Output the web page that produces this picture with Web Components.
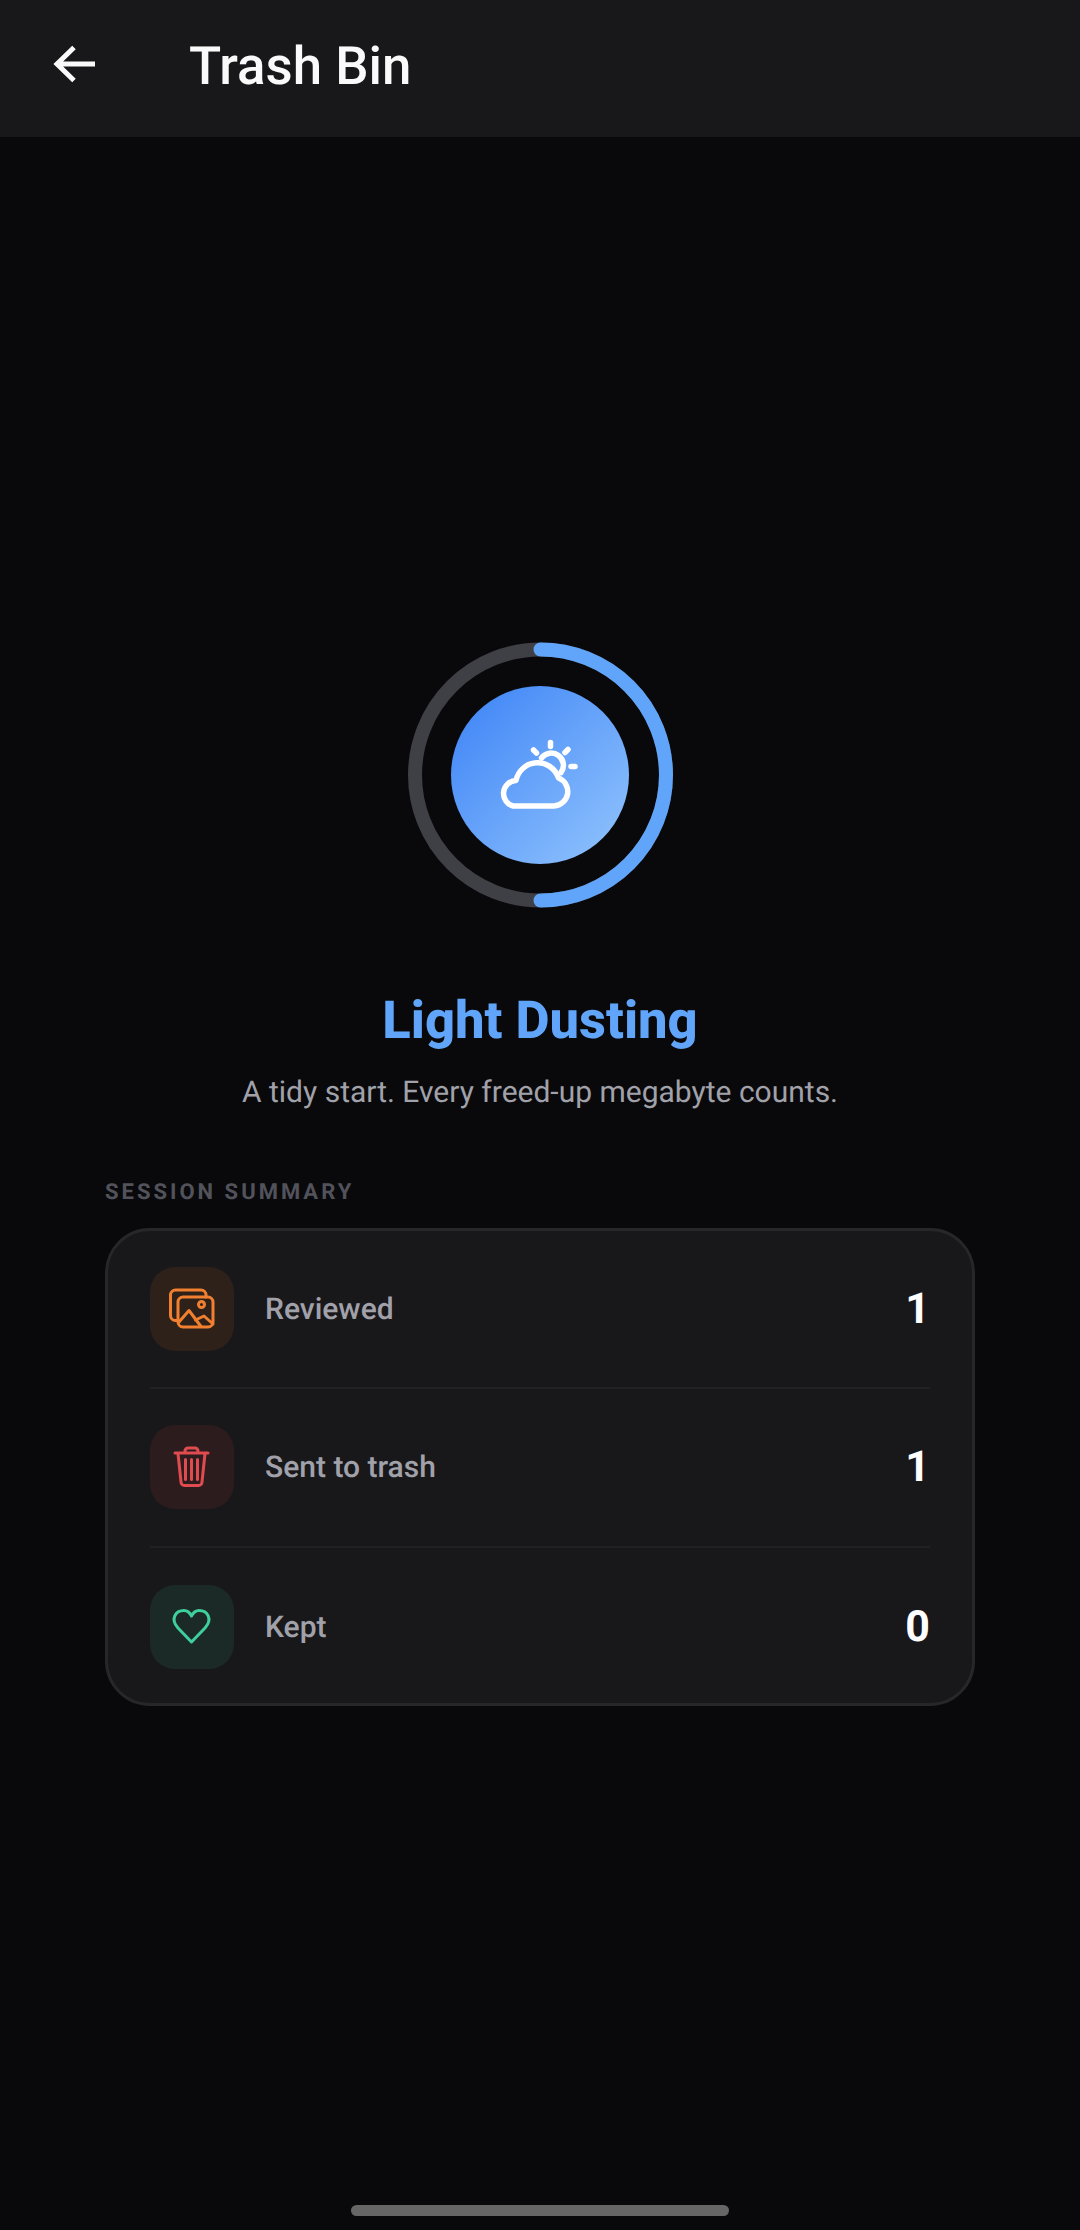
<!DOCTYPE html>
<html>
<head>
<meta charset="utf-8">
<title>Trash Bin</title>
<style>
  html, body { margin: 0; padding: 0; background: #09090b; }
  body { width: 1080px; height: 2230px; overflow: hidden; font-family: Roboto, "Liberation Sans", sans-serif; text-rendering: geometricPrecision; }
  trash-screen { height: 2230px; }
</style>
</head>
<body>
<trash-screen>
  <app-bar slot="header">Trash Bin</app-bar>
  <score-ring></score-ring>
  <span slot="title">Light Dusting</span>
  <span slot="subtitle">A tidy start. Every freed-up megabyte counts.</span>
  <span slot="section">SESSION SUMMARY</span>
  <summary-card slot="card">
    <summary-row icon="photos" count="1">Reviewed</summary-row>
    <summary-row icon="trash" count="1">Sent to trash</summary-row>
    <summary-row icon="heart" count="0">Kept</summary-row>
  </summary-card>
</trash-screen>

<script>
class TrashScreen extends HTMLElement {
  constructor() {
    super();
    this.attachShadow({ mode: "open" });
    this.shadowRoot.innerHTML = `
      <style>
        :host { display: flex; flex-direction: column; width: 1080px; background: #09090b; color: #fff; }
        .body { flex: 1; display: flex; flex-direction: column; align-items: center; padding-top: 505px; }
        .title { margin-top: 81px; height: 62px; line-height: 62px; font-size: 52.5px; font-weight: 800; color: #60a5fa; }
        .subtitle { margin-top: 22px; height: 40px; line-height: 40px; font-size: 30px; color: #a1a1aa; }
        .section { align-self: flex-start; margin: 66px 0 0 105px; height: 28px; line-height: 28px; font-size: 22px; font-weight: 700; letter-spacing: 3px; color: #52525b; }
        .card { margin-top: 21px; }
        .home { width: 378px; height: 11px; border-radius: 6px; background: #666; margin: 0 auto 14px; }
      </style>
      <slot name="header"></slot>
      <div class="body">
        <slot></slot>
        <div class="title"><slot name="title"></slot></div>
        <div class="subtitle"><slot name="subtitle"></slot></div>
        <div class="section"><slot name="section"></slot></div>
        <div class="card"><slot name="card"></slot></div>
      </div>
      <div class="home"></div>
    `;
  }
}

class AppBar extends HTMLElement {
  constructor() {
    super();
    this.attachShadow({ mode: "open" });
    this.shadowRoot.innerHTML = `
      <style>
        :host { display: flex; align-items: center; height: 137px; background: #18181b; box-sizing: border-box; padding: 0 0 6px 48px; flex: none; }
        svg { display: block; width: 52px; height: 52px; flex: none; }
        .t { margin-left: 89px; font-size: 52.8px; font-weight: 500; color: #fafafa; line-height: 60px; }
      </style>
      <svg viewBox="0 0 52 52" fill="none" stroke="#fafafa" stroke-width="5">
        <path d="M47 24H9M26 7.500L9 24L26 40.500"/>
      </svg>
      <div class="t"><slot></slot></div>
    `;
  }
}

class ScoreRing extends HTMLElement {
  constructor() {
    super();
    this.attachShadow({ mode: "open" });
    this.shadowRoot.innerHTML = `
      <style>
        :host { display: block; position: relative; width: 266px; height: 266px; }
        svg { display: block; }
        .disc { position: absolute; left: 44px; top: 44px; width: 178px; height: 178px; border-radius: 50%;
          background: linear-gradient(135deg, #3b82f6, #93c5fd); }
      </style>
      <svg width="266" height="266" viewBox="0 0 266 266" fill="none" stroke-width="14">
        <circle cx="133.500" cy="133" r="125.500" stroke="#3f3f46"/>
        <path d="M133.500 7.500A125.500 125.500 0 0 1 133.500 258.500" stroke="#60a5fa" stroke-linecap="round"/>
      </svg>
      <div class="disc">
        <!-- drawn in 130x110 box, placed on the disc -->
        <svg width="130" height="110" viewBox="0 0 130 110" fill="none" stroke="#fff" stroke-width="5.500" stroke-linecap="round" stroke-linejoin="round" style="position:absolute;left:18px;top:34px">
          <path d="M44 86H85A14.500 14.500 0 0 0 89.500 58A22 22 0 0 0 47 60.500A13 13 0 0 0 44 86Z"/>
          <path d="M72.500 38A12 12 0 0 1 92 52.500"/>
          <path d="M81.500 22.500V26.500M64.500 30L67.500 33M99 29.500L96 32.500M102 46.500H106"/>
        </svg>
      </div>
    `;
  }
}

class SummaryCard extends HTMLElement {
  constructor() {
    super();
    this.attachShadow({ mode: "open" });
    this.shadowRoot.innerHTML = `
      <style>
        :host { display: block; width: 870px; box-sizing: border-box; background: #18181b; border: 3px solid #27272a; border-radius: 45px; padding: 0 42px; }
      </style>
      <slot></slot>
    `;
  }
}

const ROW_ICONS = {
  photos: {
    tile: "#2d2119",
    color: "#f08030",
    box: "20 17 84 84",
    path: `<path d="M48 70.500H45.500A5 5 0 0 1 40.500 65.500V45A5 5 0 0 1 45.500 40H71A5 5 0 0 1 76 45V47"/>
      <rect x="48" y="47" width="35" height="30" rx="5"/>
      <circle cx="71.500" cy="54.500" r="3"/>
      <path d="M49 72L59 60.500L71 76.500M65.500 70L74 66L83 74"/>`
  },
  trash: {
    tile: "#2d1c1d",
    color: "#e04b50",
    box: "20 15 84 84",
    path: `<path d="M45 43H78M55 43V41A3 3 0 0 1 58 38H65A3 3 0 0 1 68 41V43"/>
      <path d="M48 43.500L51 72A3.500 3.500 0 0 0 54.500 75.500H68.500A3.500 3.500 0 0 0 72 72L75 43.500"/>
      <path d="M55.500 49.500V69.500M61.500 49.500V69.500M67.500 49.500V69.500"/>`
  },
  heart: {
    tile: "#1b2a27",
    color: "#3fcf9d",
    box: "20 14 84 84",
    path: `<path d="M61.500 71L48 57C40 48 45.500 39.500 54 39.500C58 39.500 60 42 61.500 45C63 42 65 39.500 69 39.500C77.500 39.500 83 48 75 57Z"/>`
  }
};

class SummaryRow extends HTMLElement {
  constructor() {
    super();
    this.attachShadow({ mode: "open" });
    const ic = ROW_ICONS[this.getAttribute("icon")];
    this.shadowRoot.innerHTML = `
      <style>
        :host { display: flex; align-items: center; padding: 36px 0 37px; border-bottom: 2px solid #212124; }
        :host(:first-child) { padding-bottom: 36px; }
        :host(:last-child) { padding: 37px 0 34px; border-bottom: 0; }
        .tile { width: 84px; height: 84px; border-radius: 25px; flex: none; background: ${ic.tile}; }
        .tile svg { display: block; }
        .label { flex: 1; margin-left: 31px; font-size: 30px; font-weight: 500; color: #a1a1aa; }
        .count { font-size: 43px; font-weight: 700; color: #fff; }
      </style>
      <div class="tile">
        <svg width="84" height="84" viewBox="${ic.box}" fill="none" stroke="${ic.color}" stroke-width="3" stroke-linecap="round" stroke-linejoin="round">${ic.path}</svg>
      </div>
      <div class="label"><slot></slot></div>
      <div class="count">${this.getAttribute("count")}</div>
    `;
  }
}

customElements.define("trash-screen", TrashScreen);
customElements.define("app-bar", AppBar);
customElements.define("score-ring", ScoreRing);
customElements.define("summary-card", SummaryCard);
customElements.define("summary-row", SummaryRow);
</script>
</body>
</html>
